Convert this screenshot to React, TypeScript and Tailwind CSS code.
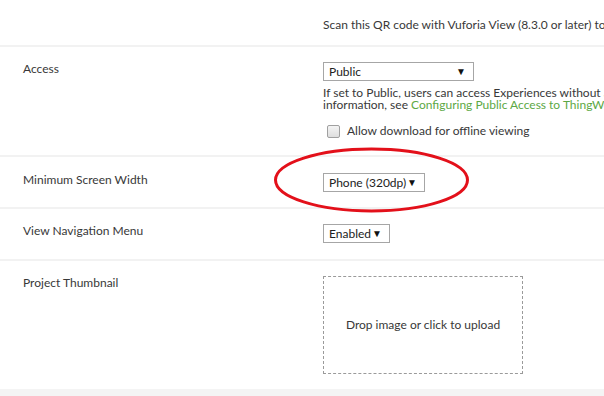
import React from "react";

// Experience settings panel: label column on the left, controls on the right.

const font = { fontFamily: '"Segoe UI", Lato, "Open Sans", sans-serif' };

function Select({ value, width }: { value: string; width: string }) {
  return (
    <div
      className={`flex h-[19px] items-center justify-between border border-[#a6a6a6] bg-white pl-[5px] pr-[7px] text-[12px] text-[#222] ${width}`}
    >
      <span>{value}</span>
      <span className="text-[10px] text-[#111]">▼</span>
    </div>
  );
}

function Divider() {
  return <div className="h-[2px] bg-[#f2f2f2]" />;
}

function Row({
  label,
  children,
  className,
}: {
  label?: string;
  children: React.ReactNode;
  className?: string;
}) {
  return (
    <div className={`grid grid-cols-[300px_1fr] pl-[23px] ${className ?? ""}`}>
      <div className="text-[12px] leading-[14px] text-[#383838]">{label}</div>
      <div>{children}</div>
    </div>
  );
}

export default function App() {
  return (
    <div className="relative h-[396px] w-[604px] overflow-hidden bg-white" style={font}>
      <Row className="h-[45px] pt-[18px]">
        <p className="whitespace-nowrap text-[12px] leading-[14px] text-[#383838]">
          Scan this QR code with Vuforia View (8.3.0 or later) to view the Experience.
        </p>
      </Row>
      <Divider />
      <Row label="Access" className="h-[108px] pt-[15px]">
        <Select value="Public" width="w-[151px]" />
        <p className="mt-[6px] whitespace-nowrap text-[12px] leading-[12px] text-[#383838]">
          If set to Public, users can access Experiences without any login credentials. For more
          <br />
          information, see{" "}
          <span className="text-[#5ca844]">Configuring Public Access to ThingWorx</span>
        </p>
        <label className="mt-[11px] flex items-center gap-[7px] pl-[4px] text-[12px] text-[#383838]">
          <span className="h-[13px] w-[13px] rounded-[2px] border border-[#a0a0a0] bg-gradient-to-b from-[#f4f4f4] to-[#dedede]" />
          <span>Allow download for offline viewing</span>
        </label>
      </Row>
      <Divider />
      <Row label="Minimum Screen Width" className="h-[50px] pt-[16px]">
        <Select value="Phone (320dp)" width="w-[102px]" />
      </Row>
      <Divider />
      <Row label="View Navigation Menu" className="h-[50px] pt-[15px]">
        <Select value="Enabled" width="w-[67px]" />
      </Row>
      <Divider />
      <Row label="Project Thumbnail" className="h-[128px] pt-[15px]">
        <div className="flex h-[98px] w-[200px] items-center justify-center border border-dashed border-[#9a9a9a] text-[12px] text-[#383838]">
          Drop image or click to upload
        </div>
      </Row>
      <div className="h-[7px] bg-[#f4f4f4]" />

      {/* red annotation ring around the screen-width select */}
      <svg
        className="pointer-events-none absolute left-[272px] top-[146px]"
        width="200"
        height="68"
        viewBox="0 0 200 68"
      >
        <ellipse cx="99.5" cy="34" rx="96" ry="31" fill="none" stroke="#e3101a" strokeWidth="3" />
      </svg>
    </div>
  );
}
